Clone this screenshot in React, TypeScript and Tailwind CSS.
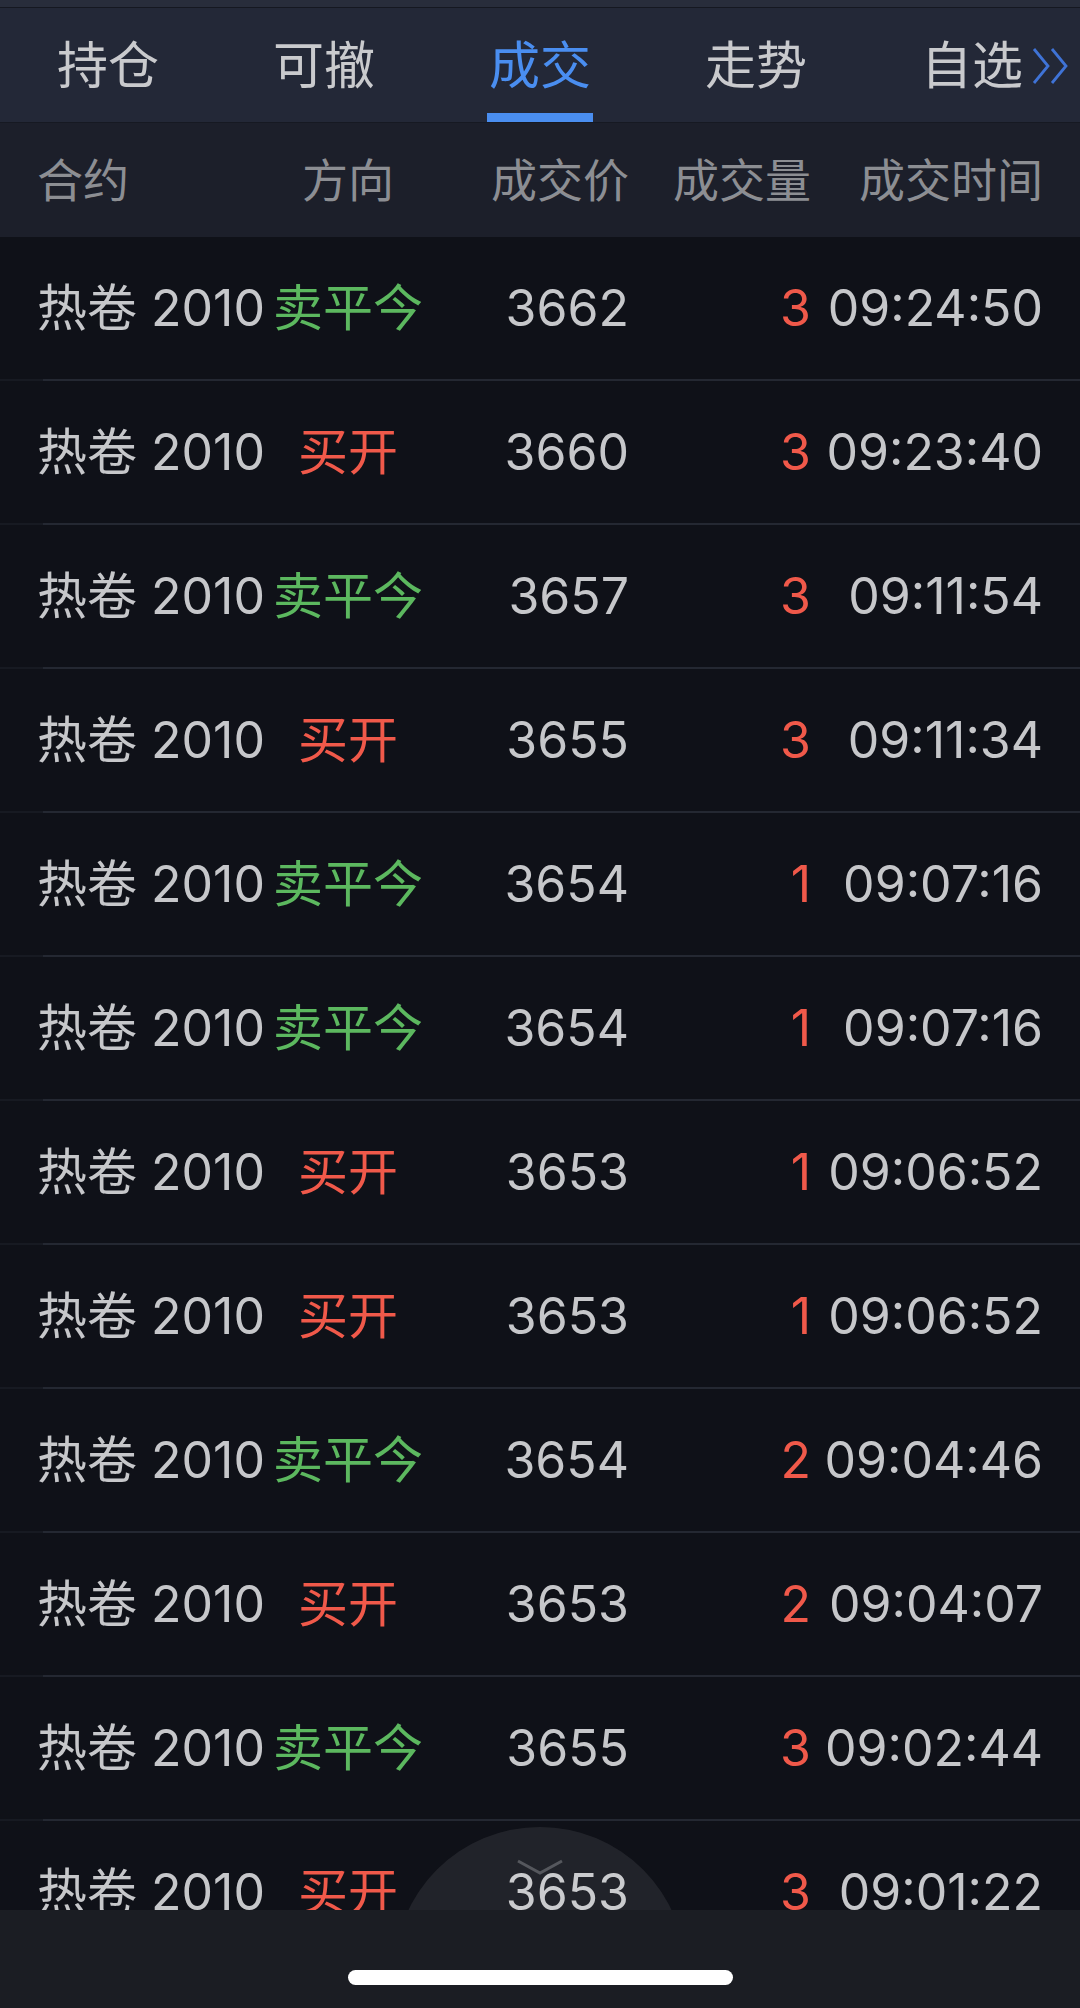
import React from "react";

type Trade = { dir: "卖平今" | "买开"; price: string; qty: string; time: string };

const trades: Trade[] = [
  { dir: "卖平今", price: "3662", qty: "3", time: "09:24:50" },
  { dir: "买开", price: "3660", qty: "3", time: "09:23:40" },
  { dir: "卖平今", price: "3657", qty: "3", time: "09:11:54" },
  { dir: "买开", price: "3655", qty: "3", time: "09:11:34" },
  { dir: "卖平今", price: "3654", qty: "1", time: "09:07:16" },
  { dir: "卖平今", price: "3654", qty: "1", time: "09:07:16" },
  { dir: "买开", price: "3653", qty: "1", time: "09:06:52" },
  { dir: "买开", price: "3653", qty: "1", time: "09:06:52" },
  { dir: "卖平今", price: "3654", qty: "2", time: "09:04:46" },
  { dir: "买开", price: "3653", qty: "2", time: "09:04:07" },
  { dir: "卖平今", price: "3655", qty: "3", time: "09:02:44" },
  { dir: "买开", price: "3653", qty: "3", time: "09:01:22" },
];

const tabs = ["持仓", "可撤", "成交", "走势", "自选"];

function DoubleChevron() {
  return (
    <svg width="36" height="38" viewBox="0 0 36 38" fill="none" stroke="#3f73d6" strokeWidth="2.8" strokeLinejoin="miter">
      <polyline points="2,2 16,19 2,36" />
      <polyline points="20,2 34,19 20,36" />
    </svg>
  );
}

function Tabs() {
  return (
    <div>
      <div className="h-[7px] bg-[#282d3b]" />
      <div className="h-px bg-[#151821]" />
      <div className="relative flex h-[114px] bg-[#232837]">
        {tabs.map((t, i) => {
          const active = i === 2;
          return (
            <div key={t} className="relative flex flex-1 items-center justify-center">
              <span className={active ? "text-[51px] leading-none text-[#4a8ef0]" : "text-[51px] leading-none text-[#c9cacd]"}>{t}</span>
              {active && <div className="absolute bottom-0 left-1/2 h-[9px] w-[106px] -translate-x-1/2 bg-[#4a8ef0]" />}
            </div>
          );
        })}
        <div className="absolute right-[12px] top-[39px]">
          <DoubleChevron />
        </div>
      </div>
    </div>
  );
}

function Header() {
  return (
    <div className="flex h-[115px] items-center whitespace-nowrap border-t border-[#161922] bg-[#1c1f2a] text-[46px] leading-none text-[#8c8e93]">
      <div className="w-[268px] pl-[37px]">合约</div>
      <div className="w-[160px] text-center">方向</div>
      <div className="w-[201px] text-right">成交价</div>
      <div className="w-[182px] text-right">成交量</div>
      <div className="w-[232px] text-right">成交时间</div>
    </div>
  );
}

function Row({ t }: { t: Trade }) {
  const sell = t.dir === "卖平今";
  return (
    <div>
      <div className="flex h-[142px] items-center whitespace-nowrap text-[50px] leading-none text-[#c6c7ca]">
        <div className="w-[268px] pl-[37px]">热卷 2010</div>
        <div className={sell ? "w-[160px] text-center text-[#5cb85f]" : "w-[160px] text-center text-[#f0594a]"}>{t.dir}</div>
        <div className="w-[201px] text-right">{t.price}</div>
        <div className="w-[182px] text-right text-[#f0594a]">{t.qty}</div>
        <div className="w-[232px] text-right">{t.time}</div>
      </div>
      <div className="flex h-[2px]">
        <div className="w-[43px] bg-[#171a22]" />
        <div className="flex-1 bg-[#242832]" />
      </div>
    </div>
  );
}

export default function App() {
  return (
    <div
      className="relative h-[2008px] w-[1080px] overflow-hidden bg-[#0f1118]"
      style={{ fontFamily: "Inter, 'Noto Sans CJK SC', sans-serif" }}
    >
      <Tabs />
      <Header />
      <div>
        {trades.map((t, i) => (
          <Row key={i} t={t} />
        ))}
      </div>

      {/* collapse handle */}
      <div className="absolute left-[394px] top-[1827px] h-[292px] w-[292px] rounded-full bg-[#ffffff]/[0.08]">
        <svg className="absolute left-[123px] top-[32px]" width="46" height="16" viewBox="0 0 46 16" fill="none" stroke="#55575d" strokeWidth="3">
          <polyline points="1,2 23,14 45,2" />
        </svg>
      </div>

      {/* home indicator bar */}
      <div className="absolute bottom-0 left-0 flex h-[98px] w-full justify-center bg-[#1b1d23]">
        <div className="mt-[60px] h-[15px] w-[385px] rounded-full bg-white" />
      </div>
    </div>
  );
}
